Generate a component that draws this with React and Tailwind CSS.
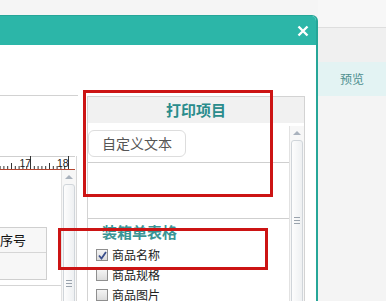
import React from "react";

const Ruler = () => {
  // ticks every ~3.8px, number every 38px
  const ticks = [];
  for (let i = 0; i <= 20; i++) {
    const x = -7.5 + i * 3.8;
    let h = 3;
    if (i % 10 === 0) h = 13;
    else if (i % 5 === 0) h = 6;
    ticks.push(<line key={i} x1={x} x2={x} y1={13 - h} y2={13} stroke="#333" strokeWidth="1" />);
  }
  return (
    <svg width="75" height="14" className="block">
      <line x1="0" x2="75" y1="0.5" y2="0.5" stroke="#cfcfcf" />
      {ticks}
      <text x="19.5" y="10.5" fontSize="10.5" fill="#222" fontFamily="Liberation Sans, sans-serif">17</text>
      <text x="57" y="10.5" fontSize="10.5" fill="#222" fontFamily="Liberation Sans, sans-serif">18</text>
      <line x1="0" x2="75" y1="13.5" y2="13.5" stroke="#b5452f" />
    </svg>
  );
};

const ScrollBar = ({ gripTop }) => (
  <div className="w-full h-full flex flex-col items-center bg-[#f7f7f7] border-l border-[#e2e2e2]">
    <svg width="10" height="8" className="mt-[3px] shrink-0">
      <path d="M1 6 L5 2 L9 6 Z" fill="#a9b2bd" />
    </svg>
    <div className="mt-[3px] w-[12px] flex-1 rounded-t-[3px] border border-[#d0d5da] bg-gradient-to-r from-[#fdfdfd] to-[#eef0f2] relative">
      <div className="absolute left-[2px] flex flex-col gap-[2px]" style={{ top: gripTop }}>
        <div className="w-[6px] h-px bg-[#9aa3ad]" />
        <div className="w-[6px] h-px bg-[#9aa3ad]" />
        <div className="w-[6px] h-px bg-[#9aa3ad]" />
      </div>
    </div>
  </div>
);

const CheckRow = ({ label, checked }) => (
  <div className="flex items-center h-[20px] pl-[8px]">
    <div className="w-[12px] h-[12px] border border-[#8f8f8f] bg-gradient-to-b from-[#f4f4f4] to-[#dcdcdc] flex items-center justify-center">
      {checked && (
        <svg width="9" height="9" viewBox="0 0 9 9">
          <path d="M1 4.5 L3.5 7.5 L8 1" fill="none" stroke="#3b4f8c" strokeWidth="1.8" />
        </svg>
      )}
    </div>
    <span className="ml-[4px] text-[12px] text-[#222] leading-none">{label}</span>
  </div>
);

export default function App() {
  return (
    <div className="relative w-[386px] h-[301px] overflow-hidden flex bg-[#f5f5f5] font-['Noto_Sans_CJK_SC',sans-serif]">
      {/* dialog */}
      <div className="w-[318px] shrink-0 pt-[15px] flex flex-col">
        <div className="flex-1 flex flex-col bg-white rounded-tr-[6px] border-r-2 border-t border-[#26a698] overflow-hidden">
          <div className="h-[29px] shrink-0 bg-[#2cb6a8] flex items-center justify-end pr-[7px]">
            <svg width="12" height="12" viewBox="0 0 12 12">
              <path d="M1.5 1.5 L10.5 10.5 M10.5 1.5 L1.5 10.5" stroke="#fff" strokeWidth="2.4" />
            </svg>
          </div>
          <div className="flex-1 flex">
            {/* left canvas */}
            <div className="w-[78px] shrink-0 flex flex-col">
              <div className="h-[51px] border-b border-[#d2d2d2]" />
              <div className="h-[60px]" />
              <div className="flex-1 flex flex-col w-[77px] border-r border-[#d8d8d8]">
                <Ruler />
                <div className="flex-1 flex">
                  <div className="w-[61px] flex flex-col">
                    <div className="h-[57px]" />
                    <div className="w-[47px] border border-l-0 border-[#cfcfcf] bg-[#f7f7f7]">
                      <div className="h-[25px] flex items-center text-[13px] text-[#111] border-b border-[#d6d6d6]">序号</div>
                      <div className="h-[26px]" />
                    </div>
                    <div className="mt-[5px] border-t border-[#d5d5d5]" />
                  </div>
                  <div className="w-[15px]">
                    <ScrollBar gripTop={95} />
                  </div>
                </div>
              </div>
            </div>
            {/* print items panel */}
            <div className="ml-[9px] mt-[51px] w-[218px] shrink-0 flex flex-col border border-b-0 border-[#d3d3d3]">
              <div className="h-[26px] shrink-0 bg-[#f1f1f1] flex items-center justify-center text-[15px] font-bold text-[#2a8c8c]">
                打印项目
              </div>
              <div className="flex-1 flex">
                <div className="flex-1 flex flex-col">
                  <div className="pt-[7px]">
                    <div className="w-[98px] h-[27px] rounded-[6px] border border-[#dddddd] flex items-center justify-center text-[14px] text-[#555]">
                      自定义文本
                    </div>
                  </div>
                  <div className="mt-[5px] border-b border-[#cfcfcf]" />
                  <div className="h-[56px] border-b border-[#cfcfcf]" />
                  <div className="pl-[14px] pt-[5px] h-[26px] text-[15px] font-bold text-[#3b9595] leading-none">装箱单表格</div>
                  <CheckRow label="商品名称" checked />
                  <CheckRow label="商品规格" />
                  <CheckRow label="商品图片" />
                </div>
                <div className="w-[15px] pt-[3px]">
                  <ScrollBar gripTop={76} />
                </div>
              </div>
            </div>
          </div>
        </div>
      </div>

      {/* page behind the dialog */}
      <div className="flex-1 flex flex-col">
        <div className="h-[28px] bg-[#f7f7f7] border-b border-[#dedede]" />
        <div className="h-[34px] bg-[#f0f0f0]" />
        <div className="h-[34px] bg-[#e3f3f3] flex items-center justify-center text-[12px] text-[#4d8f8f]">预览</div>
        <div className="flex-1 bg-[#f4f4f4]" />
      </div>

      {/* annotation boxes */}
      <div className="absolute left-[83px] top-[90px] w-[190px] h-[107px] border-[3px] border-[#cc1414]" />
      <div className="absolute left-[58px] top-[228px] w-[210px] h-[42px] border-[3px] border-[#cc1414]" />
    </div>
  );
}
